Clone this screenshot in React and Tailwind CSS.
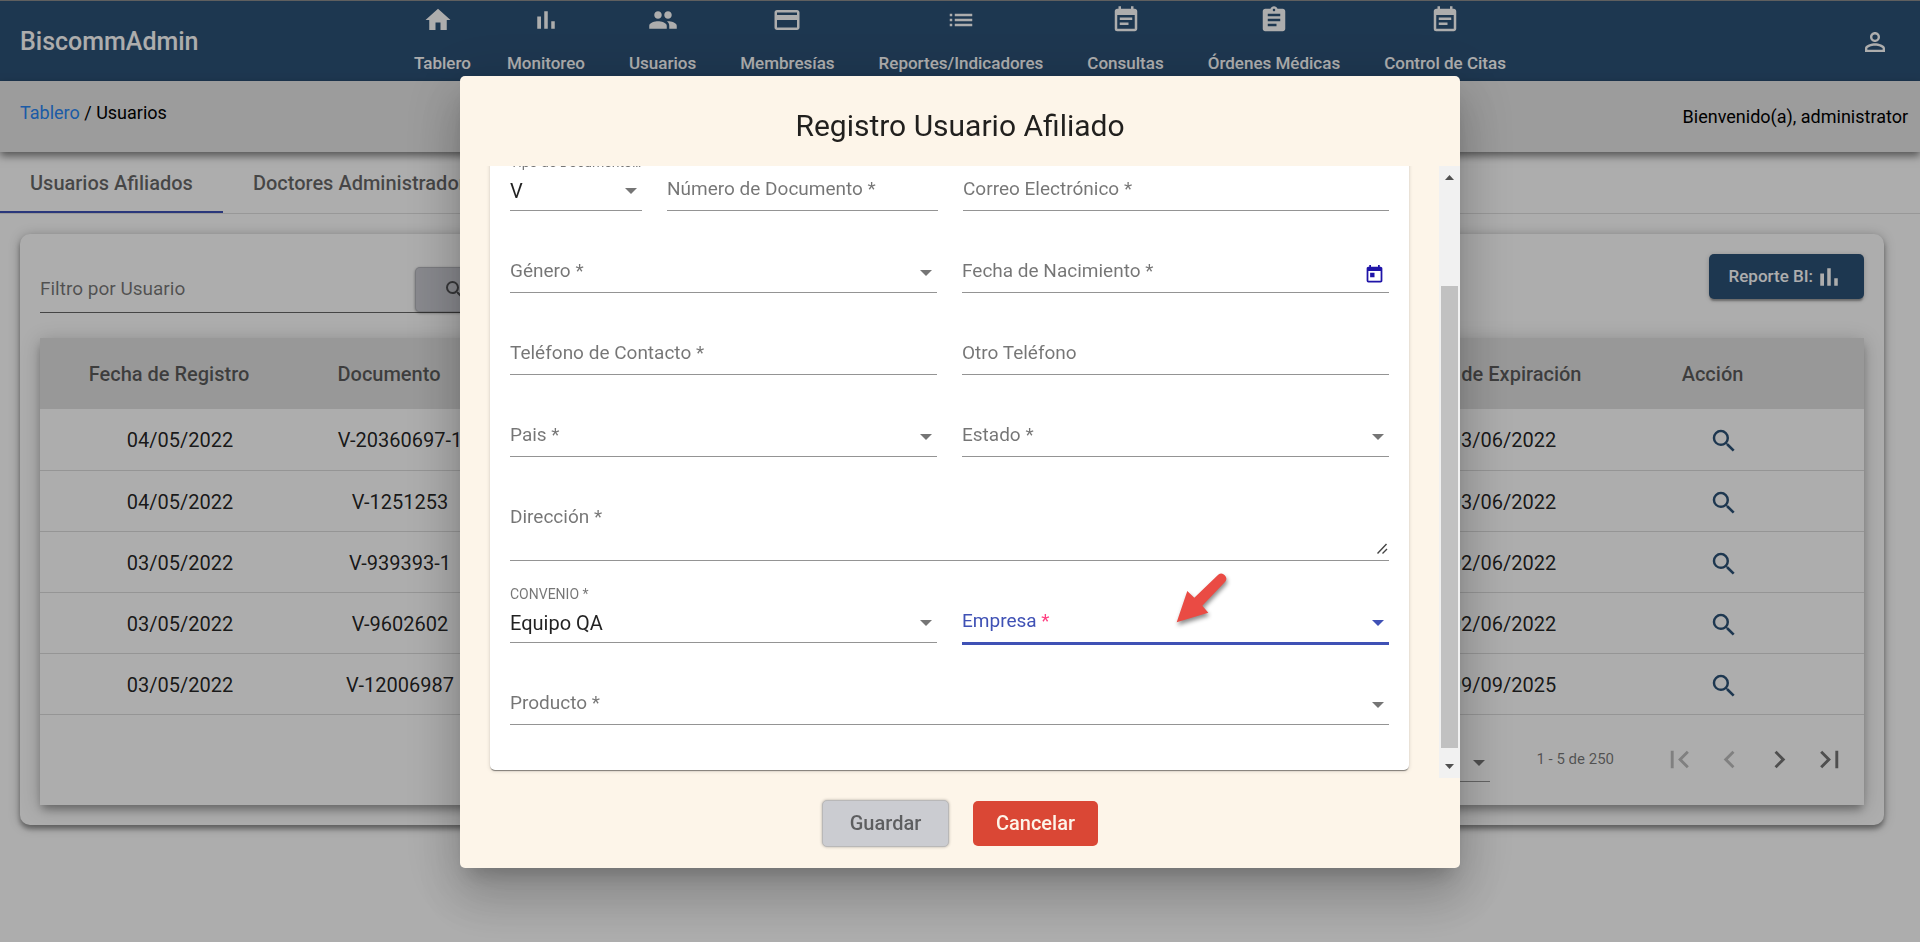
import React from "react";
import {
  MdHome,
  MdPeople,
  MdList,
  MdEventNote,
  MdAssignment,
  MdPersonOutline,
  MdSearch,
  MdFirstPage,
  MdChevronLeft,
  MdChevronRight,
  MdLastPage,
  MdToday,
} from "react-icons/md";

function BarChartIcon({ className }) {
  return (
    <svg viewBox="0 0 24 24" fill="currentColor" className={className} aria-hidden="true">
      <path d="M5 9.2h3V19H5zM10.6 5h2.8v14h-2.8zm5.6 8H19v6h-2.8z" />
    </svg>
  );
}

function CardIcon({ className }) {
  return (
    <svg viewBox="0 0 24 24" fill="currentColor" className={className} aria-hidden="true">
      <path d="M20 4H4c-1.11 0-1.99.89-1.99 2L2 18c0 1.11.89 2 2 2h16c1.11 0 2-.89 2-2V6c0-1.11-.89-2-2-2zm0 14H4v-6h16v6zm0-10H4V6h16v2z" />
    </svg>
  );
}

function Caret({ className = "text-black/54" }) {
  return (
    <svg viewBox="0 0 12 6" fill="currentColor" className={"h-[6px] w-3 " + className} aria-hidden="true">
      <path d="M0 0h12L6 6z" />
    </svg>
  );
}

const NAV = [
  { label: "Tablero", Icon: MdHome, pad: "pl-[22px] pr-[14px]", iconPad: "pr-2" },
  { label: "Monitoreo", Icon: BarChartIcon },
  { label: "Usuarios", Icon: MdPeople },
  { label: "Membresías", Icon: CardIcon },
  { label: "Reportes/Indicadores", Icon: MdList },
  { label: "Consultas", Icon: MdEventNote },
  { label: "Órdenes Médicas", Icon: MdAssignment },
  { label: "Control de Citas", Icon: MdEventNote },
];

const ROWS = [
  ["04/05/2022", "V-20360697-1", "03/06/2022"],
  ["04/05/2022", "V-1251253", "03/06/2022"],
  ["03/05/2022", "V-939393-1", "02/06/2022"],
  ["03/05/2022", "V-9602602", "02/06/2022"],
  ["03/05/2022", "V-12006987", "09/09/2025"],
];

function Header() {
  return (
    <header className="grid h-[81px] grid-cols-[1fr_auto_1fr] border-t border-[#8d8d8d] bg-[#2c5176] text-white">
      <div className="flex items-center pt-0.5 pl-5 text-[25px] font-medium">BiscommAdmin</div>
      <nav className="flex text-[17px] font-medium">
        {NAV.map(({ label, Icon, pad = "px-[22px]", iconPad = "" }) => (
          <a key={label} href="#" className={"flex flex-col items-center pt-1 " + pad}>
            <span className={iconPad}>
              <Icon className="size-[30px]" />
            </span>
            <span className="mt-4 leading-6 whitespace-nowrap">{label}</span>
          </a>
        ))}
      </nav>
      <div className="flex items-center justify-end pt-0.5 pr-[30px]">
        <button type="button" aria-label="Perfil">
          <MdPersonOutline className="size-[30px]" />
        </button>
      </div>
    </header>
  );
}

function UsersTable() {
  const th = "pr-[22px] text-center font-medium whitespace-nowrap";
  return (
    <div className="mt-[25px] bg-white shadow-[0_6px_8px_-2px_rgba(0,0,0,0.3),0_3px_18px_rgba(0,0,0,0.22)]">
      <table className="w-full table-fixed border-collapse text-[20px]">
        <colgroup>
          <col className="w-[280px]" />
          <col className="w-[160px]" />
          <col />
          <col className="w-[220px]" />
          <col className="w-[251px]" />
        </colgroup>
        <thead className="bg-[#e1e1e1] text-black/60">
          <tr className="h-[71px]">
            <th className={th}>Fecha de Registro</th>
            <th className={th}>Documento</th>
            <td />
            <th className={th}>Fecha de Expiración</th>
            <th className="pr-[52px] text-center font-medium">Acción</th>
          </tr>
        </thead>
        <tbody className="text-black/87">
          {ROWS.map(([date, doc, exp], i) => (
            <tr key={i} className="h-[61px] border-b border-[#dcdcdc]">
              <td className="pt-0.5 text-center">{date}</td>
              <td className="pt-0.5 text-center whitespace-nowrap">{doc}</td>
              <td />
              <td className="pt-0.5 text-center">{exp}</td>
              <td className="pt-1 pr-[30px]">
                <button type="button" aria-label="Ver detalle" className="mx-auto block text-[#2c5176]">
                  <MdSearch className="size-[30px]" />
                </button>
              </td>
            </tr>
          ))}
        </tbody>
      </table>
      <div className="flex h-[90px] items-center justify-end pr-[10px] text-[15px] text-black/54">
        <div className="mt-2 flex h-9 w-[70px] items-center justify-end border-b border-black/42 pr-[5px]">
          <Caret />
        </div>
        <span className="ml-[46px]">1 - 5 de 250</span>
        <div className="ml-10 flex">
          <button type="button" disabled aria-label="Primera página" className="flex size-[50px] items-center justify-center text-black/26">
            <MdFirstPage className="size-[35px]" />
          </button>
          <button type="button" disabled aria-label="Página anterior" className="flex size-[50px] items-center justify-center text-black/26">
            <MdChevronLeft className="size-[35px]" />
          </button>
          <button type="button" aria-label="Página siguiente" className="flex size-[50px] items-center justify-center">
            <MdChevronRight className="size-[35px]" />
          </button>
          <button type="button" aria-label="Última página" className="flex size-[50px] items-center justify-center">
            <MdLastPage className="size-[35px]" />
          </button>
        </div>
      </div>
    </div>
  );
}

function Page() {
  return (
    <div className="min-h-screen bg-white">
      <Header />
      <div className="flex h-[71px] justify-between bg-[#e6e6e6] pl-5 pr-3 text-[18px] shadow-[0_4px_8px_rgba(0,0,0,0.5)]">
        <div className="pt-[19px] leading-[26px]">
          <a href="#" className="text-[#2a86f5]">
            Tablero
          </a>{" "}
          / Usuarios
        </div>
        <div className="pt-[23px] leading-[26px]">Bienvenido(a), administrator</div>
      </div>
      <div role="tablist" className="flex h-[62px] border-b border-black/12 text-[20px] font-medium text-black/60">
        <button type="button" role="tab" aria-selected="true" className="border-b-2 border-[#3f51b5] px-[30px] pt-0.5">
          Usuarios Afiliados
        </button>
        <button type="button" role="tab" aria-selected="false" className="border-b-2 border-transparent px-[30px] pt-0.5">
          Doctores Administradores
        </button>
      </div>
      <main className="pt-5 pr-9 pl-5">
        <section className="rounded-[10px] bg-white p-5 shadow-[0_4px_5px_rgba(0,0,0,0.35),0_1px_12px_rgba(0,0,0,0.25)]">
          <div className="flex h-[59px] items-start justify-between">
            <div className="mt-[13px] flex h-[46px] border-b border-black/60">
              <div className="grid w-[375px] items-center">
                <label htmlFor="filtro" className="col-start-1 row-start-1 text-[19px] text-black/54">
                  Filtro por Usuario
                </label>
                <input id="filtro" className="col-start-1 row-start-1 w-full bg-transparent outline-none" />
              </div>
              <button
                type="button"
                aria-label="Buscar"
                className="flex w-20 items-center justify-center rounded-[5px] border border-black/10 bg-[#c9cad1] text-black/60 shadow-[0_1px_3px_rgba(0,0,0,0.4)]"
              >
                <MdSearch className="size-6" />
              </button>
            </div>
            <button
              type="button"
              className="flex h-[45px] items-center rounded-[5px] bg-[#2c5176] px-5 text-[17px] font-medium text-white shadow-[0_3px_2px_-1px_rgba(0,0,0,0.3),0_1px_5px_rgba(0,0,0,0.2)]"
            >
              Reporte BI:
              <BarChartIcon className="ml-px size-[30px]" />
            </button>
          </div>
          <UsersTable />
        </section>
      </main>
    </div>
  );
}

function Field({ id, label, type = "text", value, focused, className = "" }) {
  const filled = value !== undefined;
  const select = type === "select";
  const tone = focused ? "text-[#3f51b5]" : "text-black/54";
  const control =
    "col-start-1 row-start-1 w-full min-w-0 appearance-none bg-transparent text-[20px] text-black/87 outline-none";
  return (
    <div className={"flex min-w-0 flex-col justify-end " + (type === "textarea" ? "h-[104px] " : "h-[82px] ") + className}>
      {filled && (
        <label htmlFor={id} className="truncate text-[14px] leading-5 text-black/54">
          {label}
        </label>
      )}
      <div
        className={
          "grid grid-cols-[minmax(0,1fr)] " +
          (filled ? "h-[39px] items-center " : type === "textarea" ? "h-[66px] items-start " : "h-11 items-center ") +
          (focused ? "-mb-0.5 box-content h-[43px] border-b-3 border-[#3f51b5]" : "border-b border-black/42")
        }
      >
        {!filled && (
          <label
            htmlFor={id}
            className={"col-start-1 row-start-1 truncate leading-6 " + tone + (type === "textarea" ? " mt-[10px]" : "")}
          >
            {focused ? (
              <>
                {label.replace(" *", "")} <span className="text-[#ff4081]">*</span>
              </>
            ) : (
              label
            )}
          </label>
        )}
        {select ? (
          <select id={id} defaultValue={value ?? ""} className={control}>
            <option value={value ?? ""}>{value ?? ""}</option>
          </select>
        ) : type === "textarea" ? (
          <textarea id={id} className={control + " h-full resize-none"} />
        ) : (
          <input id={id} className={control} />
        )}
        {select && (
          <Caret
            className={
              "pointer-events-none col-start-1 row-start-1 mr-[5px] justify-self-end " + tone + (filled ? "" : " mt-1")
            }
          />
        )}
        {type === "textarea" && (
          <svg
            viewBox="0 0 11 11"
            className="pointer-events-none col-start-1 row-start-1 mr-px mb-1.5 size-[11px] self-end justify-self-end"
            fill="none"
            stroke="#444"
            strokeWidth="1.4"
            aria-hidden="true"
          >
            <path d="M.5 10.5l9-9.5M5.5 10.5l4.5-4.5" />
          </svg>
        )}
        {type === "date" && (
          <button
            type="button"
            aria-label="Abrir calendario"
            className="col-start-1 row-start-1 mt-2 mr-1 justify-self-end text-[#1f14a8]"
          >
            <MdToday className="size-[21px]" />
          </button>
        )}
      </div>
    </div>
  );
}

function ScrollTrack() {
  return (
    <div className="flex w-[21px] shrink-0 flex-col items-center bg-[#f1f1f1]" aria-hidden="true">
      <div className="flex h-[21px] items-center">
        <svg viewBox="0 0 9 5" className="mt-0.5 h-[5px] w-[9px]" fill="#505050">
          <path d="M0 5h9L4.500 0z" />
        </svg>
      </div>
      <div className="flex w-full flex-1 flex-col px-0.5">
        <div className="flex-1" />
        <div className="h-[81%] bg-[#c1c1c1]" />
        <div className="h-[9px]" />
      </div>
      <div className="flex h-[21px] items-center">
        <svg viewBox="0 0 9 5" className="mb-0.5 h-[5px] w-[9px]" fill="#505050">
          <path d="M0 0h9L4.500 5z" />
        </svg>
      </div>
    </div>
  );
}

function PointerArrow() {
  return (
    <svg
      viewBox="0 0 56 54"
      className="pointer-events-none absolute top-[11px] left-[212px] h-[54px] w-[56px] drop-shadow-[1px_3px_2px_rgba(0,0,0,0.45)]"
      aria-hidden="true"
    >
      <path d="M2.700 50.300L13.300 19l7 6.700L44.200 2.800a5 5 0 0 1 7 7L28.300 33.700l6 7z" fill="#ea4b44" />
    </svg>
  );
}

function RegisterDialog() {
  return (
    <div className="fixed inset-0 flex items-center justify-center bg-black/32 pt-0.5">
      <form
        role="dialog"
        aria-labelledby="dialog-title"
        className="flex w-[1000px] max-w-full flex-col overflow-hidden rounded-[5px] bg-[#fdf5e9] shadow-[0_14px_19px_-9px_rgba(0,0,0,0.2),0_30px_48px_4px_rgba(0,0,0,0.14),0_11px_58px_10px_rgba(0,0,0,0.12)]"
      >
        <h1 id="dialog-title" className="flex h-[90px] items-center justify-center pt-[10px] text-[30px] text-black/87">
          Registro Usuario Afiliado
        </h1>
        <div className="flex h-[65vh]">
          <div className="flex min-w-0 flex-1 flex-col justify-end overflow-hidden pr-[30px] pb-2 pl-[30px]">
            <div className="shrink-0 rounded-[5px] bg-white px-5 pb-[45px] text-[19px] shadow-[0_2px_1px_-1px_rgba(0,0,0,0.3),0_1px_1px_rgba(0,0,0,0.2),0_1px_4px_rgba(0,0,0,0.14)]">
              <div className="grid grid-cols-2 gap-x-[25px]">
                <div className="col-span-2 grid grid-cols-[132fr_271fr_426fr] gap-x-[25px]">
                  <Field id="tipo" label="Tipo de Documento..." type="select" value="V" />
                  <Field id="numero" label="Número de Documento *" />
                  <Field id="correo" label="Correo Electrónico *" />
                </div>
                <Field id="genero" label="Género *" type="select" />
                <Field id="nacimiento" label="Fecha de Nacimiento *" type="date" />
                <Field id="telefono" label="Teléfono de Contacto *" />
                <Field id="otro" label="Otro Teléfono" />
                <Field id="pais" label="Pais *" type="select" />
                <Field id="estado" label="Estado *" type="select" />
                <Field id="direccion" label="Dirección *" type="textarea" className="col-span-2" />
                <Field id="convenio" label="CONVENIO *" type="select" value="Equipo QA" />
                <div className="relative">
                  <Field id="empresa" label="Empresa *" type="select" focused />
                  <PointerArrow />
                </div>
                <Field id="producto" label="Producto *" type="select" className="col-span-2" />
              </div>
            </div>
          </div>
          <ScrollTrack />
        </div>
        <div className="flex h-[90px] items-center justify-center gap-6 text-[20px] font-medium">
          <button
            type="button"
            disabled
            className="h-[47px] w-[127px] rounded-[5px] border border-[#b9b8b8] bg-[#cbccd1] text-black/54 shadow-[0_0_3px_rgba(0,0,0,0.3)]"
          >
            Guardar
          </button>
          <button type="button" className="h-[45px] w-[125px] rounded-[5px] bg-[#da4735] text-[#fdf5e9]">
            Cancelar
          </button>
        </div>
      </form>
    </div>
  );
}

export default function App() {
  return (
    <div className="font-[Roboto,sans-serif] text-black">
      <Page />
      <RegisterDialog />
    </div>
  );
}
